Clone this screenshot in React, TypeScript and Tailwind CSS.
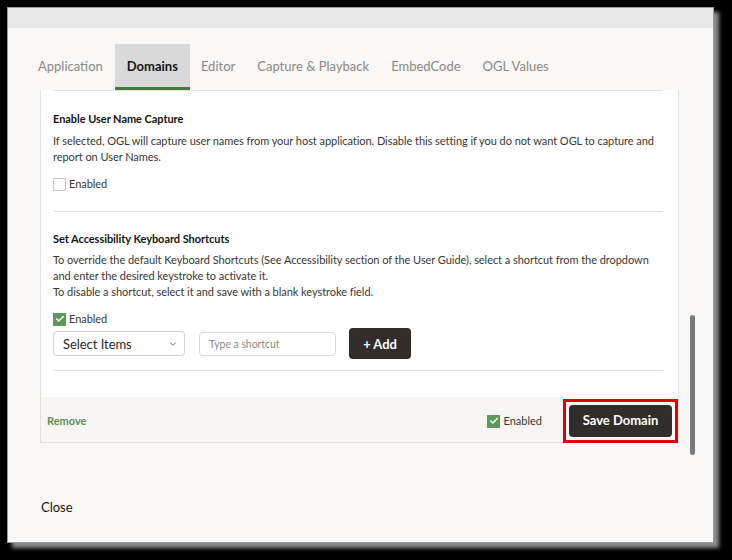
import { Check, ChevronDown } from "lucide-react";

function Box({ checked }: { checked: boolean }) {
  return checked ? (
    <span className="flex h-[13px] w-[13px] items-center justify-center bg-[#5c9a5a]">
      <Check size={10} strokeWidth={3.5} className="text-white" />
    </span>
  ) : (
    <span className="h-[13px] w-[13px] border border-[#c9c9c9] bg-[#fafafa]" />
  );
}

export default function App() {
  return (
    <div className="h-[560px] w-[732px] overflow-hidden bg-black pl-[7px] pt-[7px] font-['Lato',sans-serif] text-[#161513]">
      <div className="flex h-[536px] w-[707px] flex-col border border-[#9d9d9d] bg-[#f9f8f6] shadow-[5px_5px_4px_#8c8c8c]">
        <div className="h-[20px] bg-[#e7e7e7]" />

        <div className="flex">
          <div className="ml-[30px] flex w-[641px] flex-col">
            <div className="mt-[16px] flex h-[46px] text-[13px] text-[#8a8886]">
              <div className="flex items-center pr-[12px]">Application</div>
              <div className="flex items-center border-b-[3px] border-[#437a3b] bg-[#d9d9d9] px-[12px] pt-[3px] font-bold text-[#161513]">
                Domains
              </div>
              <div className="flex items-center px-[11px]">Editor</div>
              <div className="flex items-center px-[11px]">Capture &amp; Playback</div>
              <div className="flex items-center px-[11px]">EmbedCode</div>
              <div className="flex items-center px-[11px]">OGL Values</div>
            </div>

            <div className="ml-[2px] flex h-[353px] flex-col border border-t-0 border-[#e2e1de] bg-white">
              <div className="flex flex-1 flex-col pl-[12px] pr-[15px] text-[11px] leading-[16px] tracking-[-0.05px]">
                <div className="border-t border-[#e4e3e0] pt-[20px]">
                  <div className="font-bold">Enable User Name Capture</div>
                  <p className="mt-[6px] text-[#3a3836]">
                    If selected, OGL will capture user names from your host application. Disable this setting if you do not want OGL to capture and report on User Names.
                  </p>
                  <label className="mt-[11px] flex items-center gap-[3px] text-[#3a3836]">
                    <Box checked={false} />
                    Enabled
                  </label>
                </div>

                <div className="mt-[19px] border-t border-[#e4e3e0] pt-[19px]">
                  <div className="font-bold">Set Accessibility Keyboard Shortcuts</div>
                  <p className="mt-[5px] text-[#3a3836]">
                    To override the default Keyboard Shortcuts (See Accessibility section of the User Guide), select a shortcut from the dropdown and enter the desired keystroke to activate it.
                    <br />
                    To disable a shortcut, select it and save with a blank keystroke field.
                  </p>
                  <label className="mt-[11px] flex items-center gap-[3px] text-[#3a3836]">
                    <Box checked />
                    Enabled
                  </label>
                  <div className="mt-[1px] flex items-center">
                    <div className="flex h-[25px] w-[132px] items-center justify-between rounded-[4px] border border-[#d4d3d0] pl-[9px] pr-[6px] text-[13px] text-[#2a2826]">
                      Select Items
                      <ChevronDown size={10} strokeWidth={2} className="text-[#555]" />
                    </div>
                    <div className="ml-[14px] flex h-[24px] w-[137px] items-center rounded-[4px] border border-[#dcdbd8] pl-[9px] text-[10.5px] text-[#8d8b88]">
                      Type a shortcut
                    </div>
                    <button className="ml-[13px] h-[31px] w-[62px] rounded-[4px] bg-[#312d2a] text-[13px] font-bold text-white">
                      + Add
                    </button>
                  </div>
                </div>

                <div className="mt-[11px] border-t border-[#e4e3e0]" />
              </div>

              <div className="flex h-[45px] items-center bg-[#f7f6f4] pl-[6px] pt-[3px] text-[11px]">
                <span className="font-bold text-[#5d9057]">Remove</span>
                <label className="ml-auto flex items-center gap-[3px] text-[#3a3836]">
                  <Box checked />
                  Enabled
                </label>
                <div className="ml-[21px] border-[3px] border-[#e0000a] p-[3px]">
                  <button className="h-[32px] w-[103px] rounded-[4px] bg-[#312d2a] text-[13px] font-bold text-white">
                    Save Domain
                  </button>
                </div>
              </div>
            </div>
          </div>

          <div className="ml-[11px] mt-[287px] h-[140px] w-[5px] rounded-full bg-[#7a7a7a]" />
        </div>

        <div className="ml-[33px] mt-[43px] text-[13px]">Close</div>
      </div>
    </div>
  );
}
